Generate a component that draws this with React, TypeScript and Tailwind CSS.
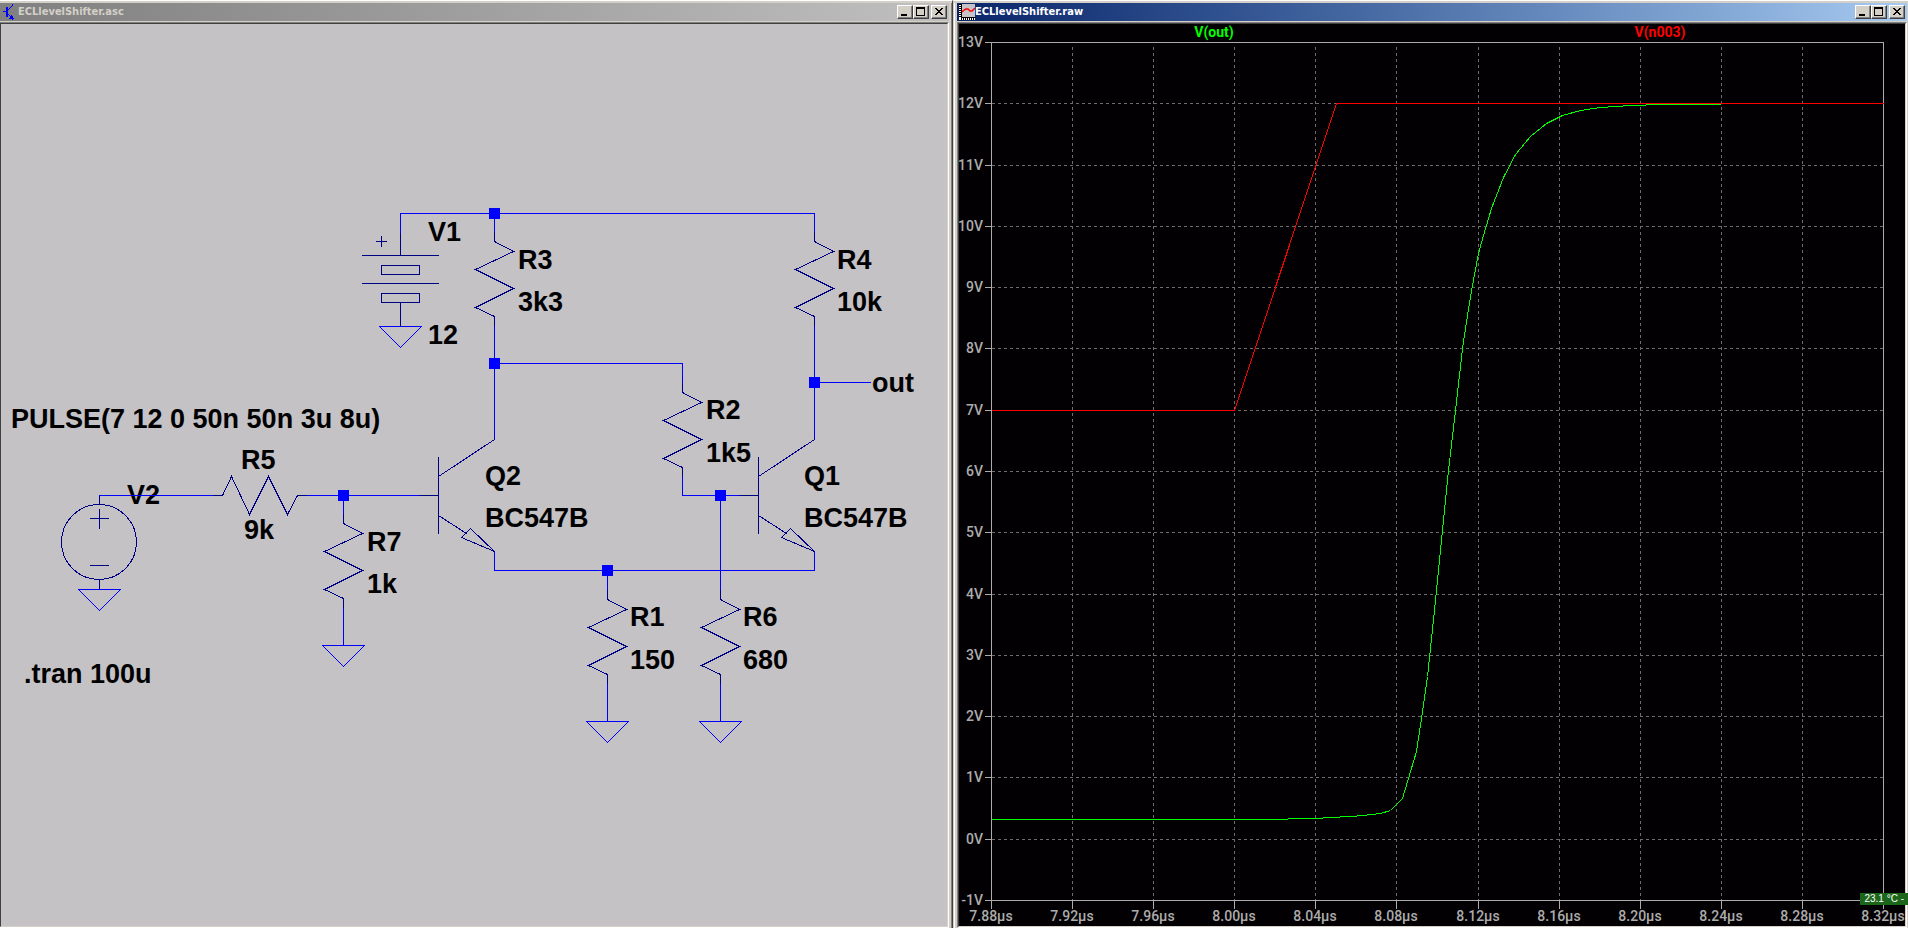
import React from 'react';
import clsx from 'clsx';

const WIRE = '#0000ff';
const PART = '#000084';
const AXIS = '#acacac';
const GRID = '#6c6c6c';

interface WindowProps {
  title: string;
  icon: React.ReactNode;
  active?: boolean;
  children: React.ReactNode;
}

const captionButton =
  'w-4 h-3.5 bg-[#d4d0c8] border border-t-white border-l-white border-r-[#404040] border-b-[#404040] shadow-[inset_-1px_-1px_0_#808080]';

const CaptionButtons: React.FC = () => (
  <div className="flex items-center">
    <button type="button" aria-label="Minimize" className={captionButton}>
      <svg viewBox="0 0 14 12" className="block w-full h-full" shapeRendering="crispEdges">
        <rect x="3" y="8" width="6" height="2" />
      </svg>
    </button>
    <button type="button" aria-label="Maximize" className={captionButton}>
      <svg viewBox="0 0 14 12" className="block w-full h-full" shapeRendering="crispEdges">
        <path d="M2 1h9v9h-9zM3 3v6h7v-6z" fillRule="evenodd" />
      </svg>
    </button>
    <button type="button" aria-label="Close" className={clsx(captionButton, 'ml-0.5')}>
      <svg viewBox="0 0 14 12" className="block w-full h-full" shapeRendering="crispEdges">
        <path d="M3 2h2v1h1v1h2v-1h1v-1h2v1h-1v1h-1v1h-1v1h1v1h1v1h1v1h-2v-1h-1v-1h-2v1h-1v1h-2v-1h1v-1h1v-1h1v-1h-1v-1h-1v-1h-1z" />
      </svg>
    </button>
  </div>
);

const Window: React.FC<WindowProps> = ({ title, icon, active, children }) => (
  <section
    className={clsx(
      'min-w-0 min-h-0 flex flex-col bg-[#d4d0c8] border-t border-t-white pt-0.5',
      active
        ? 'border-l border-l-[#d4d0c8] pr-px'
        : 'border-r border-r-[#404040]'
    )}
  >
    <div
      className={clsx(
        'flex-1 min-h-0 flex flex-col',
        active ? 'border-l border-l-white pl-0.5' : 'border-r border-r-[#808080] pr-0.5'
      )}
    >
      <header
        className={clsx(
          'h-[18px] px-0.5 flex items-center bg-linear-to-r',
          active ? 'from-[#0a246a] to-[#a6caf0] text-white' : 'from-[#808080] to-[#c0c0c0] text-[#d4d0c8]'
        )}
      >
        {icon}
        <h1 className="flex-1 truncate font-['DejaVu_Sans_Condensed','DejaVu_Sans',sans-serif] text-[11px] leading-4 font-bold">
          {title}
        </h1>
        <CaptionButtons />
      </header>

      {/* Sunken client area */}
      <div
        className={clsx(
          'flex-1 min-h-0 mt-px flex border-t border-t-[#808080] border-r border-r-white border-b border-b-white',
          active && 'border-l border-l-[#808080]'
        )}
      >
        <div className="flex-1 min-w-0 border border-t-[#404040] border-l-[#404040] border-r-[#d4d0c8] border-b-[#d4d0c8]">
          {children}
        </div>
      </div>
    </div>
  </section>
);

const SchematicIcon: React.FC = () => (
  <svg viewBox="0 0 16 16" className="w-4 h-4 shrink-0" shapeRendering="crispEdges" fill={WIRE}>
    <path d="M4 3h2v10h-2zM1 7h3v1h-3zM6 5h1v1h-1zM7 4h1v1h-1zM8 3h1v1h-1zM9 2h1v1h-1zM10 0h1v2h-1z" />
    <path d="M6 10h1v1h-1zM7 11h1v1h-1zM9 11h1v1h1v2h1v1h-1v1h-1v-1h-3v-1h1v-2h1z" />
  </svg>
);

const PlotIcon: React.FC = () => (
  <svg viewBox="0 0 16 16" className="w-4 h-4 shrink-0" shapeRendering="crispEdges">
    <rect width="16" height="16" fill="#fff" />
    <rect x="3" width="13" height="13" fill="#c6c3c6" />
    <path d="M2.5 0v14M2 13.5h14" stroke="#000" fill="none" />
    <path d="M1 0v13" stroke="#000" strokeWidth="2" strokeDasharray="1 1" />
    <path d="M2 15h14" stroke="#000" strokeWidth="2" strokeDasharray="1 1" />
    <path d="M3 8l2-2 2-1h2l2 2h2l3-3" stroke="#f00" strokeWidth="1.5" fill="none" shapeRendering="auto" />
  </svg>
);

const Junction = ({ x, y }: { x: number; y: number }) => (
  <rect x={x - 5} y={y - 5} width="10" height="10" fill={WIRE} stroke={WIRE} />
);

const Ground = ({ x, y }: { x: number; y: number }) => (
  <path d={`M${x - 21} ${y}h42l-21 21z`} stroke={WIRE} />
);

const Resistor = ({ x, y }: { x: number; y: number }) => (
  <path d={`M${x} ${y - 9}v9l19 10l-38 18l38 19l-38 19l19 9v9`} stroke={PART} />
);

const Transistor = ({ x, y }: { x: number; y: number }) => (
  <path
    d={`M${x} ${y}l-56 37M${x - 56} ${y + 18}v76M${x - 75} ${y + 56}h19M${x - 56} ${y + 76}l28 18M${x} ${y + 112}l-24 -23l-9 9z`}
    stroke={PART}
  />
);

const labels: [number, number, string][] = [
  [428, 241, 'V1'],
  [428, 344, '12'],
  [518, 269, 'R3'],
  [518, 311, '3k3'],
  [837, 269, 'R4'],
  [837, 311, '10k'],
  [872, 392, 'out'],
  [706, 419, 'R2'],
  [706, 462, '1k5'],
  [11, 428, 'PULSE(7 12 0 50n 50n 3u 8u)'],
  [241, 469, 'R5'],
  [244, 539, '9k'],
  [127, 504, 'V2'],
  [367, 551, 'R7'],
  [367, 593, '1k'],
  [485, 485, 'Q2'],
  [485, 527, 'BC547B'],
  [804, 485, 'Q1'],
  [804, 527, 'BC547B'],
  [630, 626, 'R1'],
  [630, 669, '150'],
  [743, 626, 'R6'],
  [743, 669, '680'],
  [24, 683, '.tran 100u'],
];

const Schematic: React.FC = () => (
  <svg viewBox="1 24 946 902" className="block w-full h-full bg-[#c4c2c5]" role="img" aria-label="Schematic">
    <g className="font-['Liberation_Sans',Arial,sans-serif] text-[27px] font-bold" fill="#000">
      {labels.map(([x, y, text]) => (
        <text key={`${x}-${y}`} x={x} y={y}>
          {text}
        </text>
      ))}
    </g>

    <g fill="none" shapeRendering="crispEdges" strokeLinecap="square" transform="translate(0.5 0.5)">
      {/* Wires */}
      <g stroke={WIRE}>
        <path d="M400 233V213H814V233" />
        <path d="M494 213V233M494 325V439M494 363H682V383M682 475V495H739" />
        <path d="M814 325V439M814 382H870" />
        <path d="M99 495H213M306 495H419M343 495V515M343 607V645" />
        <path d="M494 551V570H814V551" />
        <path d="M607 570V590M607 683V721M720 495V590M720 683V721" />
      </g>

      {/* Battery V1 */}
      <g stroke={PART}>
        <path d="M400 233V255M362 255H438M362 283H438M400 302V325" />
        <path d="M381 236V246M376 241H386" />
        <path d="M381 265H419V274H381ZM381 293H419V302H381Z" />
      </g>

      {/* Source V2 */}
      <g stroke={PART}>
        <circle cx="98.5" cy="541.5" r="37.5" />
        <path d="M99 496V504M90 518H108M99 509V528M90 565H108M99 579V588" />
      </g>

      <Resistor x={494} y={241} />
      <Resistor x={814} y={241} />
      <Resistor x={682} y={392} />
      <Resistor x={343} y={523} />
      <Resistor x={607} y={599} />
      <Resistor x={720} y={599} />
      <path d="M213 495h9l9 -19l18 38l19 -38l19 38l10 -19h9" stroke={PART} />

      <Transistor x={494} y={439} />
      <Transistor x={814} y={439} />

      <Ground x={400} y={326} />
      <Ground x={99} y={589} />
      <Ground x={343} y={645} />
      <Ground x={607} y={721} />
      <Ground x={720} y={721} />

      <Junction x={494} y={213} />
      <Junction x={494} y={363} />
      <Junction x={814} y={382} />
      <Junction x={343} y={495} />
      <Junction x={720} y={495} />
      <Junction x={607} y={570} />
    </g>
  </svg>
);

// Plot frame
const LEFT = 991;
const RIGHT = 1883;
const TOP = 42;
const BOTTOM = 900;

const voltages = Array.from({ length: 15 }, (_, i) => 13 - i);
const times = Array.from({ length: 12 }, (_, i) => (7.88 + i * 0.04).toFixed(2));
const yAt = (v: number) => Math.round(TOP + ((13 - v) * (BOTTOM - TOP)) / 14);
const xAt = (i: number) => Math.round(LEFT + (i * (RIGHT - LEFT)) / 11);

const outTrace =
  '991,819 1287,819 1288,818 1317,818 1329,817 1351,816 1362,815 1372,814 1380,813 1390,810 1402,798 1416,751 1421,718 1427,676 1434,610 1442,530 1448,470 1455,410 1462,348 1467,315 1472,285 1478,253 1483,235 1491,208 1503,177 1515,154 1530,136 1546,123 1562,115 1580,110 1600,107 1630,105 1662,104 1720,104';

const Plot: React.FC = () => (
  <svg viewBox="959 24 946 902" className="block w-full h-full bg-[#020002]" role="img" aria-label="Waveforms">
    <g fill="none" shapeRendering="crispEdges" transform="translate(0.5 0.5)">
      <g stroke={GRID} strokeDasharray="3 3">
        {voltages.slice(1, -1).map((v) => (
          <path key={v} d={`M${LEFT} ${yAt(v)}H${RIGHT}`} />
        ))}
        {times.slice(1, -1).map((t, i) => (
          <path key={t} d={`M${xAt(i + 1)} ${TOP + 4}V${BOTTOM}`} />
        ))}
      </g>
      <g stroke={AXIS}>
        <path d={`M${LEFT} ${TOP}H${RIGHT}V${BOTTOM}H${LEFT}Z`} />
        {voltages.map((v) => (
          <path key={v} d={`M${LEFT - 7} ${yAt(v)}h7`} />
        ))}
        {times.map((t, i) => (
          <path key={t} d={`M${xAt(i)} ${BOTTOM}v8`} />
        ))}
      </g>
      <polyline points={outTrace} stroke="#00ff00" />
      <polyline points="991,410 1234,410 1336,103 1883,103" stroke="#ff0000" />
    </g>

    <g className="font-[Roboto,'Liberation_Sans',sans-serif] text-[14px] font-medium" fill={AXIS} stroke="none">
      {voltages.map((v) => (
        <text key={v} x={LEFT - 8} y={yAt(v) + 5} textAnchor="end">
          {v}V
        </text>
      ))}
      {times.map((t, i) => (
        <text key={t} x={xAt(i)} y={BOTTOM + 21} textAnchor="middle">
          {t}µs
        </text>
      ))}
    </g>
    <g className="font-[Roboto,'Liberation_Sans',sans-serif] text-[14px] font-bold" textAnchor="middle">
      <text x="1214" y="37" fill="#00ff00">
        V(out)
      </text>
      <text x="1660" y="37" fill="#ff0000">
        V(n003)
      </text>
    </g>
  </svg>
);

const App: React.FC = () => {
  return (
    <main className="relative h-screen overflow-hidden grid grid-cols-[953fr_955fr] grid-rows-1 bg-[#d4d0c8]">
      <Window title="ECLlevelShifter.asc" icon={<SchematicIcon />}>
        <Schematic />
      </Window>
      <Window title="ECLlevelShifter.raw" icon={<PlotIcon />} active>
        <Plot />
      </Window>

      {/* Desktop temperature readout floats over the plot window */}
      <div className="absolute right-0 bottom-[23px] px-1 bg-[#1c661c] text-white font-['Liberation_Sans',Arial,sans-serif] text-[10px] leading-3 whitespace-nowrap">
        23.1 °C -
      </div>
    </main>
  );
};

export default App;
